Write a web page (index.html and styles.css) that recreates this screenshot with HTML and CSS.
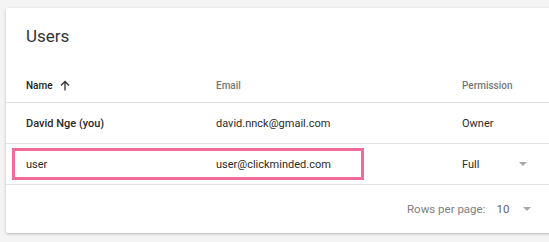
FILE: index.html
```html
<!DOCTYPE html>
<html lang="en">
<head>
    <meta charset="UTF-8">
    <title>Users</title>
    <link rel="stylesheet" href="styles.css">
</head>
<body>
<div class="card">
    <h2 class="title">Users</h2>
    <div class="row head">
        <div class="cell name">Name
            <svg class="sort" width="10" height="11" viewBox="0 0 10 11"><path d="M5 10.5V1.5M1 5.5L5 1.5L9 5.5" fill="none" stroke="#333" stroke-width="1.3"/></svg>
        </div>
        <div class="cell">Email</div>
        <div class="cell">Permission</div>
    </div>
    <div class="row">
        <div class="cell name">David Nge (you)</div>
        <div class="cell">david.nnck@gmail.com</div>
        <div class="cell">Owner</div>
    </div>
    <div class="row">
        <div class="highlight"></div>
        <div class="cell">user</div>
        <div class="cell">user@clickminded.com</div>
        <div class="cell perm">Full <span class="caret"></span></div>
    </div>
    <div class="footer">
        <span class="label">Rows per page:</span>
        <span class="count">10</span>
        <span class="caret"></span>
    </div>
</div>
</body>
</html>
```

FILE: styles.css
```css
body {
    margin: 0;
    background: #f4f4f4;
    font-family: Roboto, "Liberation Sans", sans-serif;
    color: #212121;
    overflow: hidden;
    width: 549px;
    height: 242px;
}
.card {
    margin: 8px 0 0 6px;
    width: 560px;
    height: 225px;
    background: #fff;
    box-shadow: 0 1px 3px rgba(0, 0, 0, 0.25);
    border-radius: 2px;
}
.title {
    margin: 0;
    padding: 0 20px;
    height: 60px;
    line-height: 56px;
    font-size: 17px;
    font-weight: 400;
    color: #333;
}
.row {
    position: relative;
    display: grid;
    grid-template-columns: 190px 246px 1fr;
    align-items: center;
    height: 40px;
    padding-left: 20px;
    border-bottom: 1px solid #e3e3e3;
    font-size: 11px;
    color: #2a2a2a;
}
.row.head {
    height: 34px;
    font-size: 10px;
    font-weight: 500;
    color: #777;
}
.row.head .name {
    display: flex;
    align-items: center;
    color: #222;
}
.name {
    font-weight: 500;
}
.sort {
    margin-left: 7px;
}
.perm {
    display: flex;
    align-items: center;
    width: 65px;
    justify-content: space-between;
}
.caret {
    width: 0;
    height: 0;
    border-left: 4px solid transparent;
    border-right: 4px solid transparent;
    border-top: 4px solid #a8a8a8;
}
.highlight {
    position: absolute;
    left: 6px;
    top: 4px;
    width: 346px;
    height: 26px;
    border: 3px solid #f06b95;
}
.footer {
    display: flex;
    align-items: center;
    height: 48px;
    padding-left: 401px;
    font-size: 11.5px;
    color: #808080;
}
.count {
    margin-left: 11px;
    color: #666;
}
.footer .caret {
    margin-left: 14px;
}
```
